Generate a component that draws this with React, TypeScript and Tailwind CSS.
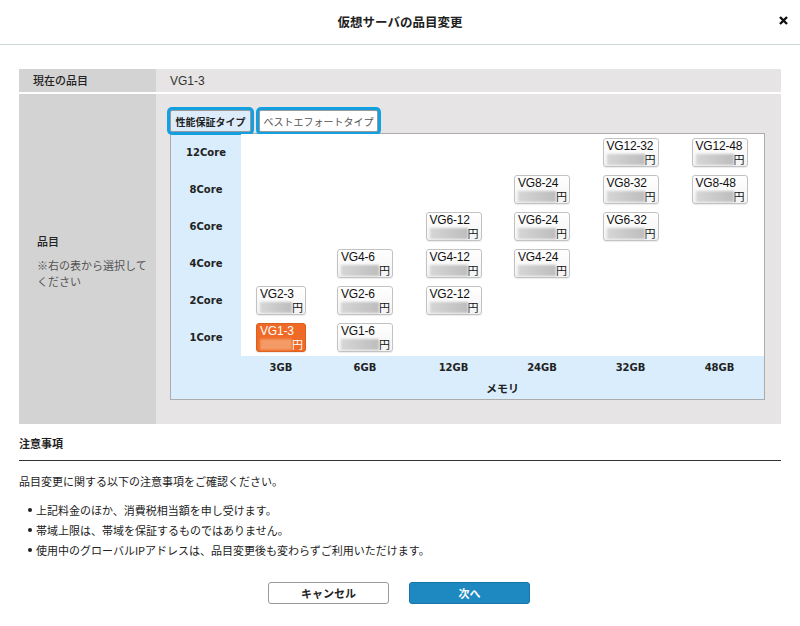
import React from "react";

const JP = '"Noto Sans CJK JP", "Liberation Sans", sans-serif';

const MEM = ["3GB", "6GB", "12GB", "24GB", "32GB", "48GB"];
const MEM_KEY = [3, 6, 12, 24, 32, 48];

// cores -> available memory sizes
const ROWS: { core: number; mem: number[] }[] = [
  { core: 12, mem: [32, 48] },
  { core: 8, mem: [24, 32, 48] },
  { core: 6, mem: [12, 24, 32] },
  { core: 4, mem: [6, 12, 24] },
  { core: 2, mem: [3, 6, 12] },
  { core: 1, mem: [3, 6] },
];

const PlanBox = ({
  name,
  narrow,
  selected,
}: {
  name: string;
  narrow: boolean;
  selected: boolean;
}) => (
  <div
    className={`flex h-[29px] flex-col rounded-[3px] border px-[2px] pt-[1px] shadow-[0_1px_1px_rgba(0,0,0,0.08)] ${
      narrow ? "w-[50px]" : "w-[56px]"
    } ${
      selected
        ? "border-[#d9601f] bg-[#ee6a26] text-white"
        : "border-[#c2c2c2] bg-gradient-to-b from-white to-[#f3f3f3] text-[#111]"
    }`}
  >
    <span
      className="whitespace-nowrap pl-[1px] text-[12px] leading-[13px] tracking-[-0.2px]"
      style={{ fontFamily: '"Liberation Sans", sans-serif' }}
    >
      {name}
    </span>
    <div className="flex items-end pl-[1px]">
      <span
        className={`mb-[1px] h-[11px] flex-1 blur-[1px] ${
          selected ? "bg-[#f49a66]" : "bg-gradient-to-r from-[#d6d6d6] to-[#bdbdbd]"
        }`}
      />
      <span className="text-[11px] leading-[13px]" style={{ fontFamily: JP }}>
        円
      </span>
    </div>
  </div>
);

export default function App() {
  return (
    <div
      className="h-[626px] w-[800px] bg-white text-[#222]"
      style={{ fontFamily: JP }}
    >
      {/* header */}
      <div className="relative flex h-[45px] items-center justify-center border-b border-[#cdd8d0]">
        <span className="text-[12.5px] font-bold">仮想サーバの品目変更</span>
        <svg
          className="absolute right-[12px] top-[16px]"
          width="9"
          height="9"
          viewBox="0 0 9 9"
        >
          <path d="M1 1L8 8M8 1L1 8" stroke="#111" strokeWidth="2.4" />
        </svg>
      </div>

      <div className="px-[19px] pt-[24px]">
        {/* form table */}
        <div className="grid grid-cols-[137px_1fr] gap-y-[2px]">
          <div className="flex h-[23px] items-center bg-[#d3d3d3] pl-[14px] text-[11px] font-medium">
            現在の品目
          </div>
          <div
            className="flex h-[23px] items-center bg-[#e6e4e4] pl-[14px] text-[12px] text-[#333]"
            style={{ fontFamily: '"Liberation Sans", sans-serif' }}
          >
            VG1-3
          </div>

          <div className="flex flex-col justify-center bg-[#d3d3d3] pl-[18px] pt-[4px]">
            <span className="text-[11px] font-medium leading-[14px]">品目</span>
            <span className="mt-[9px] text-[11px] leading-[16px] text-[#555]">
              ※右の表から選択して
              <br />
              ください
            </span>
          </div>

          <div className="bg-[#e6e4e4] pb-[24px] pl-[14px] pr-[15px] pt-[16px]">
            {/* tabs */}
            <div className="flex gap-[8px]">
              <div className="flex h-[22px] w-[81px] items-center justify-center whitespace-nowrap rounded-[2px] border border-[#9a9a9a] bg-[#dcecfb] text-[10px] font-bold text-[#222] ring-[3px] ring-[#14a0e0]">
                性能保証タイプ
              </div>
              <div className="flex h-[22px] w-[119px] items-center justify-center whitespace-nowrap rounded-[2px] border border-[#9a9a9a] bg-white text-[10px] text-[#555] ring-[3px] ring-[#14a0e0]">
                ベストエフォートタイプ
              </div>
            </div>

            {/* plan matrix */}
            <div className="mt-[1px] w-[595px] border border-[#acacac] bg-[#d9edfc]">
              <div className="flex">
                <div className="flex w-[70px] flex-col">
                  {ROWS.map((r) => (
                    <div
                      key={r.core}
                      className="flex h-[37px] items-center justify-center text-[10px] font-bold text-[#222]"
                      style={{ fontFamily: '"DejaVu Sans", sans-serif' }}
                    >
                      {r.core}Core
                    </div>
                  ))}
                </div>
                <div className="grid flex-1 grid-cols-[80px_88px_89px_88px_89px_89px] bg-white">
                  {ROWS.map((r) =>
                    MEM_KEY.map((m, i) => (
                      <div
                        key={`${r.core}-${m}`}
                        className="flex h-[37px] items-center justify-center"
                      >
                        {r.mem.includes(m) && (
                          <PlanBox
                            name={`VG${r.core}-${m}`}
                            narrow={i === 0}
                            selected={r.core === 1 && m === 3}
                          />
                        )}
                      </div>
                    ))
                  )}
                </div>
              </div>
              <div className="flex">
                <div className="w-[70px]" />
                <div className="flex-1">
                  <div
                    className="grid h-[22px] grid-cols-[80px_88px_89px_88px_89px_89px] items-center text-[10px] font-bold text-[#222]"
                    style={{ fontFamily: '"DejaVu Sans", sans-serif' }}
                  >
                    {MEM.map((g) => (
                      <span key={g} className="text-center">
                        {g}
                      </span>
                    ))}
                  </div>
                  <div className="flex h-[21px] items-center justify-center text-[11px] font-bold">
                    メモリ
                  </div>
                </div>
              </div>
            </div>
          </div>
        </div>

        {/* notes */}
        <div className="mt-[12px] border-b border-[#333] pb-[10px] text-[11px] font-bold leading-[14px]">
          注意事項
        </div>
        <p className="mt-[13px] text-[11px] leading-[14px]">
          品目変更に関する以下の注意事項をご確認ください。
        </p>
        <ul className="mt-[12px] pl-[9px] text-[11px]">
          {[
            "上記料金のほか、消費税相当額を申し受けます。",
            "帯域上限は、帯域を保証するものではありません。",
            "使用中のグローバルIPアドレスは、品目変更後も変わらずご利用いただけます。",
          ].map((t) => (
            <li key={t} className="flex h-[20px] items-center">
              <span className="mr-[4px] h-[4px] w-[4px] rounded-full bg-[#222]" />
              {t}
            </li>
          ))}
        </ul>

        {/* actions */}
        <div className="mt-[22px] flex justify-center gap-[20px] pr-[2px]">
          <button
            type="button"
            className="h-[22px] w-[121px] rounded-[3px] border border-[#9a9a9a] bg-white text-[11px] font-bold text-[#222]"
          >
            キャンセル
          </button>
          <button
            type="button"
            className="h-[22px] w-[121px] rounded-[3px] border border-[#1676a8] bg-[#1e88c0] text-[11px] font-bold text-white"
          >
            次へ
          </button>
        </div>
      </div>
    </div>
  );
}
